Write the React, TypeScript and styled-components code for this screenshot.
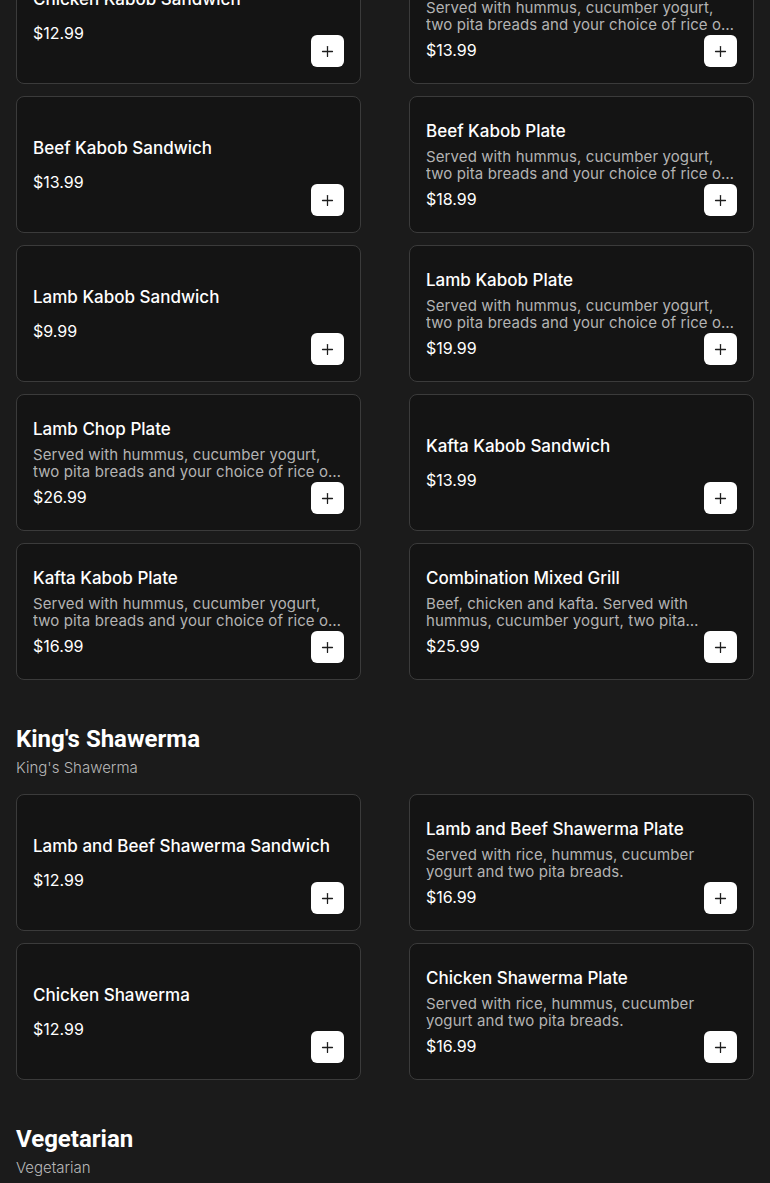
import React from 'react';
import styled, { createGlobalStyle } from 'styled-components';
import { Plus } from 'lucide-react';

type MenuItem = {
  name: string;
  description?: string;
  price: string;
};

type MenuSection = {
  title?: string;
  subtitle?: string;
  items: MenuItem[];
};

const PLATE = 'Served with hummus, cucumber yogurt, two pita breads and your choice of rice or salad.';
const SHAWERMA_PLATE = 'Served with rice, hummus, cucumber yogurt and two pita breads.';

const sections: MenuSection[] = [
  {
    items: [
      { name: 'Chicken Kabob Sandwich', price: '$12.99' },
      { name: 'Chicken Kabob Plate', description: PLATE, price: '$13.99' },
      { name: 'Beef Kabob Sandwich', price: '$13.99' },
      { name: 'Beef Kabob Plate', description: PLATE, price: '$18.99' },
      { name: 'Lamb Kabob Sandwich', price: '$9.99' },
      { name: 'Lamb Kabob Plate', description: PLATE, price: '$19.99' },
      { name: 'Lamb Chop Plate', description: PLATE, price: '$26.99' },
      { name: 'Kafta Kabob Sandwich', price: '$13.99' },
      { name: 'Kafta Kabob Plate', description: PLATE, price: '$16.99' },
      {
        name: 'Combination Mixed Grill',
        description:
          'Beef, chicken and kafta. Served with hummus, cucumber yogurt, two pita breads and your choice of rice or salad.',
        price: '$25.99',
      },
    ],
  },
  {
    title: "King's Shawerma",
    subtitle: "King's Shawerma",
    items: [
      { name: 'Lamb and Beef Shawerma Sandwich', price: '$12.99' },
      { name: 'Lamb and Beef Shawerma Plate', description: SHAWERMA_PLATE, price: '$16.99' },
      { name: 'Chicken Shawerma', price: '$12.99' },
      { name: 'Chicken Shawerma Plate', description: SHAWERMA_PLATE, price: '$16.99' },
    ],
  },
  {
    title: 'Vegetarian',
    subtitle: 'Vegetarian',
    items: [],
  },
];

const GlobalStyle = createGlobalStyle`
  html, body {
    margin: 0;
    background: #1b1b1b;
  }
  * {
    box-sizing: border-box;
  }
`;

// page is scrolled a little, first row of cards is cut at the top
const Page = styled.main`
  padding: 0 16px 40px;
  margin-top: -53px;
  font-family: Inter, 'DejaVu Sans', sans-serif;
  color: #fff;
`;

const Section = styled.section`
  & + & {
    margin-top: 43px;
  }
`;

const SectionTitle = styled.h2`
  margin: 0;
  font-family: Roboto, sans-serif;
  font-size: 24px;
  font-weight: 700;
  line-height: 32px;
  color: #fff;
`;

const SectionSubtitle = styled.p`
  margin: 3px 0 16px;
  font-size: 15px;
  line-height: 20px;
  font-weight: 300;
  color: #b8b8b8;
`;

const Grid = styled.div`
  display: grid;
  grid-template-columns: 1fr 1fr;
  column-gap: 48px;
  row-gap: 12px;
`;

const Card = styled.div`
  position: relative;
  height: 137px;
  padding: 0 16px;
  display: flex;
  flex-direction: column;
  justify-content: center;
  background: #141414;
  border: 1px solid #3b3b3b;
  border-radius: 8px;
`;

const ItemName = styled.h3`
  margin: 0 0 5px;
  font-size: 17px;
  font-weight: 500;
  line-height: 24px;
  color: #fff;
`;

const ItemDescription = styled.p`
  margin: 0;
  font-size: 15px;
  letter-spacing: 0.1px;
  line-height: 17px;
  color: #b3b3b3;
  display: -webkit-box;
  -webkit-line-clamp: 2;
  -webkit-box-orient: vertical;
  overflow: hidden;
`;

const ItemPrice = styled.span`
  margin-top: 5px;
  font-size: 16px;
  line-height: 24px;
  color: #fff;
`;

const AddButton = styled.button`
  position: absolute;
  right: 16px;
  bottom: 16px;
  width: 33px;
  height: 32px;
  padding: 0;
  display: flex;
  align-items: center;
  justify-content: center;
  background: #fff;
  border: none;
  border-radius: 6px;
  color: #1e1e1e;
  cursor: pointer;
`;

const ItemCard = ({ item }: { item: MenuItem }) => (
  <Card>
    <ItemName>{item.name}</ItemName>
    <ItemDescription>{item.description}</ItemDescription>
    <ItemPrice>{item.price}</ItemPrice>
    <AddButton aria-label={`Add ${item.name}`}>
      <Plus size={17} strokeWidth={1.8} />
    </AddButton>
  </Card>
);

const App = () => (
  <>
    <GlobalStyle />
    <Page>
      {sections.map((section, i) => (
        <Section key={i}>
          {section.title && <SectionTitle>{section.title}</SectionTitle>}
          {section.subtitle && <SectionSubtitle>{section.subtitle}</SectionSubtitle>}
          {section.items.length > 0 && (
            <Grid>
              {section.items.map((item) => (
                <ItemCard key={item.name} item={item} />
              ))}
            </Grid>
          )}
        </Section>
      ))}
    </Page>
  </>
);

export default App;
